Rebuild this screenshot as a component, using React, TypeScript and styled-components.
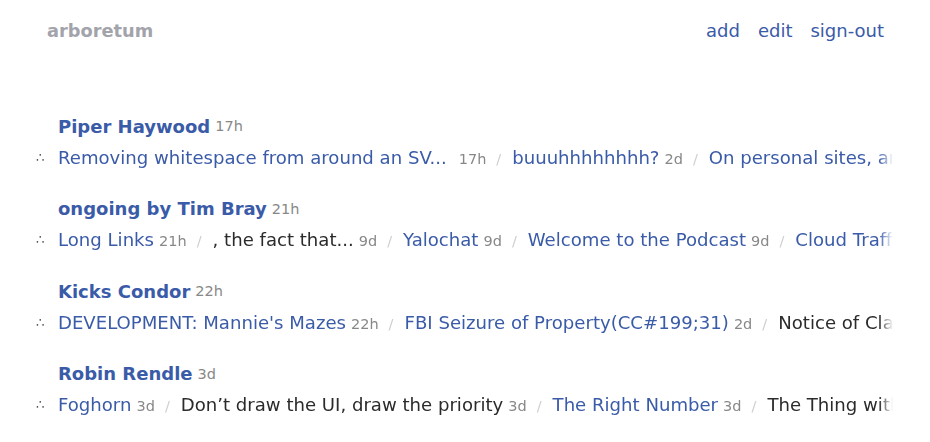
import React from "react";
import styled, { createGlobalStyle } from "styled-components";

const Global = createGlobalStyle`
  html, body { margin: 0; padding: 0; background: #fff; }
  body { font-family: "DejaVu Sans", Verdana, sans-serif; color: #2b2b2b; }
  a { text-decoration: none; }
`;

const Page = styled.div`
  width: 930px;
  height: 442px;
  overflow: hidden;
  box-sizing: border-box;
`;

const Header = styled.header`
  display: flex;
  justify-content: space-between;
  align-items: center;
  height: 60px;
  padding: 0 46px 0 47px;
  box-sizing: border-box;
`;

const Brand = styled.a`
  font-weight: bold;
  font-size: 17.8px;
  color: #a3a3ab;
`;

const Nav = styled.nav`
  display: flex;
  gap: 18px;
`;

const NavLink = styled.a`
  font-size: 18px;
  color: #3a5ba8;
`;

const Feeds = styled.main`
  display: flex;
  flex-direction: column;
  gap: 20.5px;
  padding: 52px 37px 0 36px;
`;

const Feed = styled.section`
  display: flex;
  flex-direction: column;
`;

const FeedTitle = styled.div`
  height: 28px;
  display: flex;
  align-items: center;
  padding-left: 22px;
  white-space: nowrap;
`;

const FeedName = styled.a`
  font-weight: bold;
  font-size: 18px;
  color: #3a5ba8;
`;

const Age = styled.span`
  font-size: 14.5px;
  color: #888;
  margin-left: 5px;
`;

const Entries = styled.div`
  height: 34px;
  display: flex;
  align-items: center;
  white-space: nowrap;
  overflow: hidden;
  -webkit-mask-image: linear-gradient(to right, #000 calc(100% - 14px), transparent);
  mask-image: linear-gradient(to right, #000 calc(100% - 14px), transparent);
`;

const Bullet = styled.span`
  flex: none;
  width: 22px;
  font-size: 13px;
  color: #555;
`;

const Entry = styled.span`
  flex: none;
  display: inline-flex;
  align-items: baseline;
`;

const EntryLink = styled.a<{ $visited?: boolean }>`
  font-size: 18.1px;
  color: ${(p) => (p.$visited ? "#2b2b2b" : "#3a5ba8")};
`;

const Sep = styled.span`
  font-size: 14.5px;
  color: #cfcfcf;
  margin: 0 11px 0 10px;
`;

type E = { t: string; a: string; v?: boolean; gap?: number };
const feeds: { name: string; age: string; entries: E[] }[] = [
  {
    name: "Piper Haywood",
    age: "17h",
    entries: [
      { t: "Removing whitespace from around an SV...", a: "17h", gap: 12 },
      { t: "buuuhhhhhhhh?", a: "2d" },
      { t: "On personal sites, and the web", a: "2d" },
    ],
  },
  {
    name: "ongoing by Tim Bray",
    age: "21h",
    entries: [
      { t: "Long Links", a: "21h" },
      { t: ", the fact that...", a: "9d", v: true },
      { t: "Yalochat", a: "9d" },
      { t: "Welcome to the Podcast", a: "9d" },
      { t: "Cloud Traffic", a: "9d" },
    ],
  },
  {
    name: "Kicks Condor",
    age: "22h",
    entries: [
      { t: "DEVELOPMENT: Mannie's Mazes", a: "22h" },
      { t: "FBI Seizure of Property(CC#199;31)", a: "2d" },
      { t: "Notice of Claim", a: "2d", v: true },
    ],
  },
  {
    name: "Robin Rendle",
    age: "3d",
    entries: [
      { t: "Foghorn", a: "3d" },
      { t: "Don\u2019t draw the UI, draw the priority", a: "3d", v: true },
      { t: "The Right Number", a: "3d" },
      { t: "The Thing with Leading in CSS", a: "3d", v: true },
    ],
  },
];

export default function App() {
  return (
    <Page>
      <Global />
      <Header>
        <Brand href="#">arboretum</Brand>
        <Nav>
          <NavLink href="#">add</NavLink>
          <NavLink href="#">edit</NavLink>
          <NavLink href="#">sign-out</NavLink>
        </Nav>
      </Header>
      <Feeds>
        {feeds.map((f) => (
          <Feed key={f.name}>
            <FeedTitle>
              <FeedName href="#">{f.name}</FeedName>
              <Age>{f.age}</Age>
            </FeedTitle>
            <Entries>
              <Bullet>∴</Bullet>
              {f.entries.map((e, i) => (
                <Entry key={i}>
                  {i > 0 && <Sep>/</Sep>}
                  <EntryLink href="#" $visited={e.v}>{e.t}</EntryLink>
                  <Age style={e.gap ? { marginLeft: e.gap } : undefined}>{e.a}</Age>
                </Entry>
              ))}
            </Entries>
          </Feed>
        ))}
      </Feeds>
    </Page>
  );
}
